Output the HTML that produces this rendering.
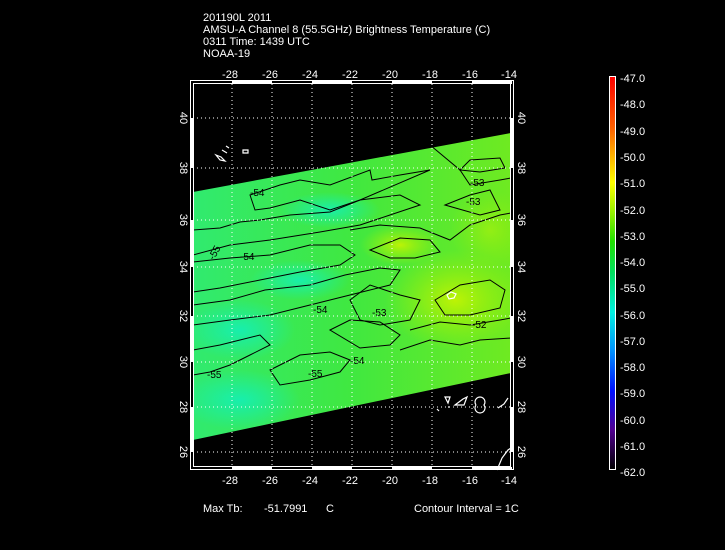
<!DOCTYPE html>
<html><head><meta charset="utf-8"><style>
html,body{margin:0;padding:0;background:#000;}
body{width:725px;height:550px;overflow:hidden;position:relative;font-family:"Liberation Sans",sans-serif;color:#fff;}
svg{position:absolute;left:0;top:0;}
text{font-family:"Liberation Sans",sans-serif;fill:#fff;}
text.k{fill:#000;}
</style></head><body>
<svg width="725" height="550" viewBox="0 0 725 550">
<defs>
<linearGradient id="cb" x1="0" y1="0" x2="0" y2="1">
<stop offset="0" stop-color="#ff0000"/>
<stop offset="0.13" stop-color="#ff6000"/>
<stop offset="0.2" stop-color="#ffb000"/>
<stop offset="0.27" stop-color="#ffff00"/>
<stop offset="0.35" stop-color="#90f000"/>
<stop offset="0.42" stop-color="#20e000"/>
<stop offset="0.5" stop-color="#00e060"/>
<stop offset="0.6" stop-color="#00f0e0"/>
<stop offset="0.7" stop-color="#0090ff"/>
<stop offset="0.8" stop-color="#0010ff"/>
<stop offset="0.9" stop-color="#500090"/>
<stop offset="1" stop-color="#000000"/>
</linearGradient>
<linearGradient id="sw" x1="0" y1="0" x2="1" y2="0">
<stop offset="0" stop-color="#30ea70"/>
<stop offset="0.5" stop-color="#40e840"/>
<stop offset="1" stop-color="#70ea20"/>
</linearGradient>
<radialGradient id="cy" cx="0.5" cy="0.5" r="0.5">
<stop offset="0" stop-color="#10f0c0" stop-opacity="0.8"/>
<stop offset="1" stop-color="#10f0c0" stop-opacity="0"/>
</radialGradient>
<radialGradient id="yl" cx="0.5" cy="0.5" r="0.5">
<stop offset="0" stop-color="#c8f400" stop-opacity="0.9"/>
<stop offset="1" stop-color="#a0f000" stop-opacity="0"/>
</radialGradient>
<clipPath id="cl"><polygon points="193,192 511,133 511,373 193,440"/></clipPath>
</defs>
<text x="203" y="21" font-size="11">201190L 2011</text>
<text x="203" y="33" font-size="11">AMSU-A Channel 8 (55.5GHz) Brightness Temperature (C)</text>
<text x="203" y="45" font-size="11">0311 Time: 1439 UTC</text>
<text x="203" y="57" font-size="11">NOAA-19</text>

<g clip-path="url(#cl)">
<rect x="190" y="130" width="325" height="320" fill="url(#sw)"/>
<ellipse cx="240" cy="330" rx="55" ry="30" fill="url(#cy)"/>
<ellipse cx="240" cy="400" rx="60" ry="30" fill="url(#cy)"/>
<ellipse cx="300" cy="280" rx="50" ry="20" fill="url(#cy)"/>
<ellipse cx="330" cy="210" rx="50" ry="18" fill="url(#cy)"/>
<ellipse cx="455" cy="300" rx="70" ry="50" fill="url(#yl)"/>
<ellipse cx="400" cy="245" rx="40" ry="20" fill="url(#yl)"/>
<ellipse cx="490" cy="230" rx="40" ry="40" fill="url(#yl)" opacity="0.5"/>
<g fill="none" stroke="#000" stroke-width="1">
<path d="M250,195 L280,185 L300,180 L330,185 L370,170 L372,180 L400,175 L430,170 L360,200 L330,210 L300,200 L270,208 L255,210 Z"/>
<path d="M193,230 L220,228 L240,222 L260,220 L290,215 L330,212 L360,200 L400,195 L420,205 L390,215 L360,225 L320,232 L270,240 L230,245 L193,255"/>
<path d="M193,262 L230,258 L270,255 L310,245 L340,245 L355,255 L340,265 L300,272 L260,280 L220,288 L193,292"/>
<path d="M193,305 L230,300 L265,290 L310,285 L345,275 L380,268 L400,270 L390,285 L350,295 L310,305 L270,315 L230,320 L193,325"/>
<path d="M193,350 L220,345 L240,340 L260,335 L270,345 L250,355 L230,365 L210,372 L193,375"/>
<path d="M270,370 L300,355 L330,352 L350,360 L340,372 L310,380 L280,385 Z"/>
<path d="M370,250 L400,238 L430,240 L440,252 L415,258 L390,258 Z"/>
<path d="M350,230 L380,225 L420,228 L450,240 L470,225 L500,215 L511,213"/>
<path d="M350,300 L370,285 L400,295 L420,300 L410,320 L380,325 L360,320 Z"/>
<path d="M435,300 L460,285 L490,280 L505,290 L500,308 L470,315 L445,315 Z"/>
<path d="M460,170 L470,160 L500,158 L505,168 L480,172 Z"/>
<path d="M430,145 L460,170 L470,185 L500,180 L511,178"/>
<path d="M445,205 L470,195 L490,190 L500,210 L480,215 Z"/>
<path d="M410,330 L440,322 L470,325 L500,320 L511,318"/>
<path d="M400,350 L430,340 L460,345 L480,340 L511,338"/>
<path d="M330,330 L350,320 L380,322 L400,335 L390,345 L360,348 Z"/>
</g>
</g>
<g font-size="10">
<text class="k" x="250" y="196">-54</text>
<text class="k" x="470" y="186">-53</text>
<text class="k" x="466" y="205">-53</text>
<text class="k" x="210" y="258" transform="rotate(-60 214 256)">-55</text>
<text class="k" x="240" y="260">-54</text>
<text class="k" x="313" y="313">-54</text>
<text class="k" x="372" y="316">-53</text>
<text class="k" x="472" y="328">-52</text>
<text class="k" x="207" y="378">-55</text>
<text class="k" x="308" y="377">-55</text>
<text class="k" x="350" y="364">-54</text>
</g>
<g fill="none" stroke="#fff" stroke-width="1.2">
<path d="M216,155 l5,2 l4,4 l-5,-1 z M222,150 l5,3 M226,146 l3,2 M243,150 l5,0 l0,3 l-5,0z"/>
<path d="M447,295 l4,-3 l5,2 l-2,4 l-5,1 z"/>
<path d="M455,405 l8,-6 l4,-2 l-3,8 l-6,0 z M476,405 a5,5 0 1,0 8,0 a5,5 0 1,0 -8,0 M445,397 l5,0 l-2,6 z M437,409 l2,2 M448,407 l2,0"/>
<path d="M497,470 l5,-12 l6,-8 l3,-2 M498,408 l6,-4 l4,-6"/>
</g>
<g stroke="#fff" stroke-width="1" stroke-dasharray="1,3">
<path d="M232,84V467M272,84V467M312,84V467M352,84V467M392,84V467M432,84V467M472,84V467"/>
<path d="M193,118H511M193,168H511M193,220H511M193,267H511M193,316H511M193,362H511M193,407H511M193,452H511"/>
</g>
<rect x="190.5" y="80.5" width="323" height="389" fill="none" stroke="#fff"/>
<rect x="193.5" y="83.5" width="317" height="383" fill="none" stroke="#fff"/>
<g fill="#fff">
<rect x="232" y="81" width="40" height="3"/><rect x="312" y="81" width="40" height="3"/><rect x="392" y="81" width="40" height="3"/><rect x="472" y="81" width="40" height="3"/>
<rect x="232" y="467" width="40" height="3"/><rect x="312" y="467" width="40" height="3"/><rect x="392" y="467" width="40" height="3"/><rect x="472" y="467" width="40" height="3"/>
<rect x="191" y="118" width="3" height="50"/><rect x="191" y="220" width="3" height="47"/><rect x="191" y="316" width="3" height="46"/><rect x="191" y="407" width="3" height="45"/>
<rect x="510" y="118" width="3" height="50"/><rect x="510" y="220" width="3" height="47"/><rect x="510" y="316" width="3" height="46"/><rect x="510" y="407" width="3" height="45"/>
</g>
<g font-size="11" text-anchor="middle">
<text x="230" y="78">-28</text><text x="270" y="78">-26</text><text x="310" y="78">-24</text><text x="350" y="78">-22</text><text x="390" y="78">-20</text><text x="430" y="78">-18</text><text x="470" y="78">-16</text><text x="509" y="78">-14</text>
<text x="230" y="484">-28</text><text x="270" y="484">-26</text><text x="310" y="484">-24</text><text x="350" y="484">-22</text><text x="390" y="484">-20</text><text x="430" y="484">-18</text><text x="470" y="484">-16</text><text x="509" y="484">-14</text>
</g>
<g font-size="11" text-anchor="middle">
<text transform="translate(180,118) rotate(90)">40</text><text transform="translate(180,168) rotate(90)">38</text><text transform="translate(180,220) rotate(90)">36</text><text transform="translate(180,267) rotate(90)">34</text><text transform="translate(180,316) rotate(90)">32</text><text transform="translate(180,362) rotate(90)">30</text><text transform="translate(180,407) rotate(90)">28</text><text transform="translate(180,452) rotate(90)">26</text>
<text transform="translate(518,118) rotate(90)">40</text><text transform="translate(518,168) rotate(90)">38</text><text transform="translate(518,220) rotate(90)">36</text><text transform="translate(518,267) rotate(90)">34</text><text transform="translate(518,316) rotate(90)">32</text><text transform="translate(518,362) rotate(90)">30</text><text transform="translate(518,407) rotate(90)">28</text><text transform="translate(518,452) rotate(90)">26</text>
</g>
<rect x="609.5" y="76.5" width="6" height="393" fill="url(#cb)" stroke="#fff"/>
<g font-size="11">
<text x="620" y="82">-47.0</text><text x="620" y="108">-48.0</text><text x="620" y="135">-49.0</text><text x="620" y="161">-50.0</text><text x="620" y="187">-51.0</text><text x="620" y="214">-52.0</text><text x="620" y="240">-53.0</text><text x="620" y="266">-54.0</text><text x="620" y="292">-55.0</text><text x="620" y="319">-56.0</text><text x="620" y="345">-57.0</text><text x="620" y="371">-58.0</text><text x="620" y="397">-59.0</text><text x="620" y="424">-60.0</text><text x="620" y="450">-61.0</text><text x="620" y="476">-62.0</text>
</g>
<text x="203" y="512" font-size="11">Max Tb:</text>
<text x="264" y="512" font-size="11">-51.7991</text>
<text x="326" y="512" font-size="11">C</text>
<text x="414" y="512" font-size="11">Contour Interval = 1C</text>
</svg>
</body></html>
